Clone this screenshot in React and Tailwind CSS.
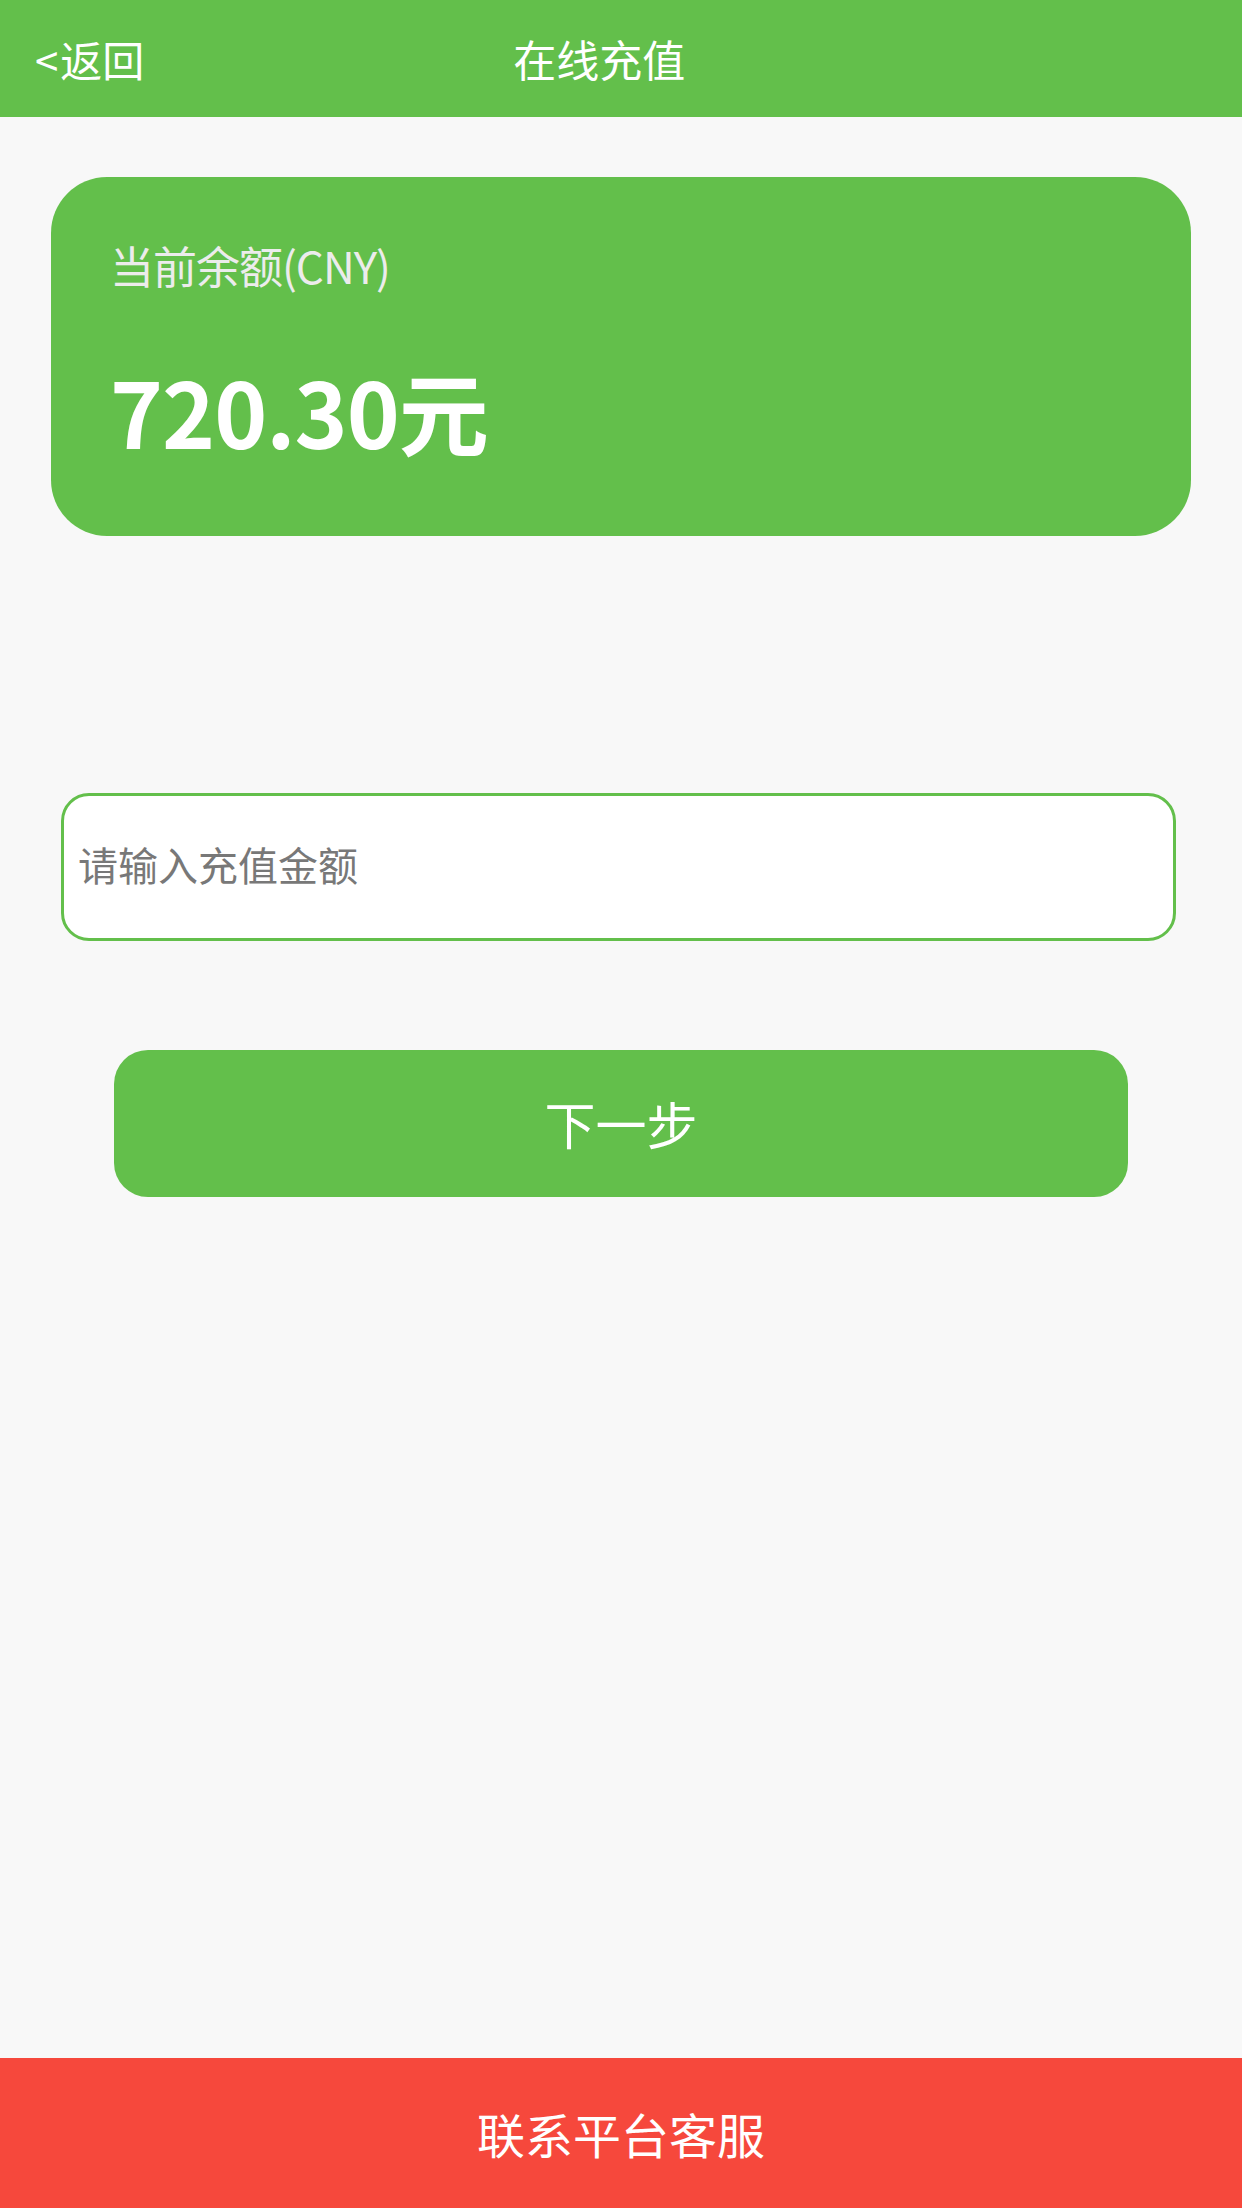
import React from 'react';

const font = { fontFamily: '"Noto Sans CJK SC", "Noto Sans", sans-serif' };

export default function App() {
  const [amount, setAmount] = React.useState('');

  return (
    <div className="flex min-h-[2208px] w-[1242px] flex-col bg-[#f8f8f8]" style={font}>
      {/* header */}
      <div className="flex h-[117px] shrink-0 items-center bg-[#63bf4b] pl-[35px] text-white">
        <button className="flex items-center text-[42px] leading-none text-white">
          <span className="mr-[2px]">&lt;</span>返回
        </button>
        <div className="flex-1 pr-[188px] text-center text-[43px] leading-none">在线充值</div>
      </div>

      {/* balance card */}
      <div className="mx-[51px] mt-[60px] flex h-[359px] flex-col rounded-[56px] bg-[#63bf4b] px-[59px] pt-[66px]">
        <div className="text-[44px] leading-none tracking-[-1px] text-[#ececec]">当前余额(CNY)</div>
        <div className="mt-[78px] text-[90px] font-bold leading-none tracking-[-1px] text-white">720.30元</div>
      </div>

      {/* amount input */}
      <div className="ml-[61px] mr-[66px] mt-[257px]">
        <input
          value={amount}
          onChange={e => setAmount(e.target.value)}
          placeholder="请输入充值金额"
          className="h-[148px] w-full rounded-[28px] border-[3px] border-[#63bf4b] bg-white pb-[6px] pl-[14px] pr-[16px] text-[40px] text-[#333] outline-none placeholder:text-[#787878]"
        />
      </div>

      {/* next button */}
      <div className="mx-[114px] mt-[109px]">
        <button className="flex h-[147px] w-full items-center justify-center rounded-[34px] bg-[#63bf4b] text-[51px] leading-none text-white">
          下一步
        </button>
      </div>

      {/* footer */}
      <button className="mt-auto flex h-[150px] w-full shrink-0 items-center justify-center bg-[#f6483c] text-[48px] leading-none text-white">
        联系平台客服
      </button>
    </div>
  );
}
